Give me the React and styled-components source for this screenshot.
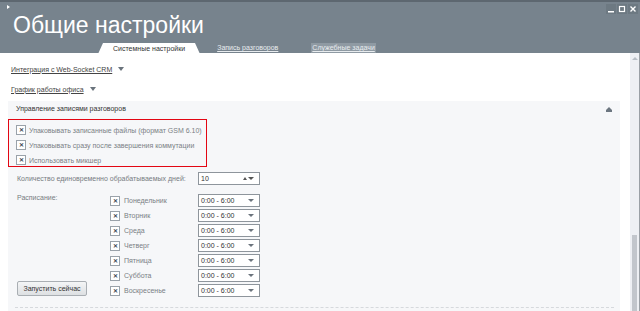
import styled, { createGlobalStyle } from 'styled-components';

const GlobalStyle = createGlobalStyle`
  html, body { margin: 0; padding: 0; }
  body {
    width: 640px;
    height: 311px;
    overflow: hidden;
    background: #ffffff;
    font-family: "Liberation Sans", Arial, sans-serif;
  }
`;

const Window = styled.div`
  width: 640px;
  height: 311px;
  display: flex;
  flex-direction: column;
  overflow: hidden;
  font-size: 7px;
  white-space: nowrap;
`;

const Header = styled.div`
  height: 53px;
  background: #77838d;
  border-top: 2px solid #5d6770;
  box-sizing: border-box;
  display: flex;
  flex-direction: column;
  position: relative;
`;

const Corner = styled.div`
  position: absolute;
  left: 7px;
  top: 3px;
  width: 0;
  height: 0;
  border-left: 3px solid #ffffff;
  border-top: 2px solid transparent;
  border-bottom: 2px solid transparent;
`;

const WinButtons = styled.div`
  position: absolute;
  right: 2px;
  top: 2px;
  display: flex;
  gap: 1px;
`;

const WinButton = styled.div`
  width: 10px;
  height: 10px;
  background: #6d7982;
  display: flex;
  align-items: center;
  justify-content: center;
`;

const Title = styled.div`
  color: #ffffff;
  font-size: 23px;
  line-height: 26px;
  margin: 10px 0 0 13px;
`;

const Tabs = styled.div`
  display: flex;
  align-items: flex-end;
  margin-top: 5px;
  padding-left: 103px;
  height: 12px;
`;

const ActiveTab = styled.div`
  position: relative;
  background: #ffffff;
  color: #333;
  height: 11px;
  line-height: 12px;
  padding: 0 10px;
  margin-right: 21px;
  &::before, &::after {
    content: '';
    position: absolute;
    bottom: 0;
    border-bottom: 11px solid #ffffff;
  }
  &::before { left: -5px; border-left: 5px solid transparent; }
  &::after { right: -5px; border-right: 5px solid transparent; }
`;

const TabLink = styled.div`
  color: #e8ecef;
  line-height: 10px;
  margin-bottom: 1px;
  text-decoration: underline;
  margin-right: 32px;
  padding: 0 1px;
  background: ${(p) => (p.$hl ? '#8f9aa3' : 'transparent')};
`;

const Body = styled.div`
  flex: 1;
  display: flex;
  min-height: 0;
`;

const Content = styled.div`
  flex: 1;
  padding: 11px 10px 0 8px;
  display: flex;
  flex-direction: column;
`;

const Scrollbar = styled.div`
  width: 9px;
  background: #eef0f4;
  display: flex;
  flex-direction: column;
  align-items: center;
  border-right: 1px solid #9aa0a6;
`;

const ScrollUp = styled.div`
  margin-top: 4px;
  width: 0;
  height: 0;
  border-left: 3px solid transparent;
  border-right: 3px solid transparent;
  border-bottom: 3px solid #b8bec5;
`;

const Thumb = styled.div`
  margin-top: auto;
  width: 5px;
  height: 76px;
  background: #c2c6cc;
`;

const Collapse = styled.div`
  display: flex;
  align-items: center;
  gap: 6px;
  padding-left: 3px;
  height: 10px;
  margin-bottom: ${(p) => (p.$last ? '7px' : '10px')};
  color: #444;
  span { text-decoration: underline; }
`;

const Arrow = styled.i`
  width: 0;
  height: 0;
  border-left: 3px solid transparent;
  border-right: 3px solid transparent;
  border-top: 4px solid #6a737c;
`;

const Panel = styled.div`
  flex: 1;
  background: #f6f7f9;
  display: flex;
  flex-direction: column;
`;

const PanelHeader = styled.div`
  height: 14px;
  padding: 4px 8px 0;
  color: #333;
  display: flex;
  justify-content: space-between;
`;

const CollapseIcon = styled.div`
  position: relative;
  width: 6px;
  height: 6px;
  margin-top: 2px;
  &::before {
    content: '';
    position: absolute;
    left: 0;
    top: 0;
    border-left: 3px solid transparent;
    border-right: 3px solid transparent;
    border-bottom: 3px solid #6c7680;
  }
  &::after {
    content: '';
    position: absolute;
    left: 0;
    top: 3px;
    width: 6px;
    height: 2px;
    background: #6c7680;
  }
`;

const Highlight = styled.div`
  width: 199px;
  box-sizing: border-box;
  border: 1px solid #e30613;
  padding: 5px 0 0 7px;
  display: flex;
  flex-direction: column;
  gap: 5px;
  height: 48px;
`;

const CheckRow = styled.label`
  display: flex;
  align-items: center;
  gap: 3px;
  color: #7a7f85;
  height: 10px;
`;

const Box = styled.span`
  width: 8px;
  height: 8px;
  flex: none;
  border: 1px solid #9aa2aa;
  background: #ffffff;
  display: flex;
  align-items: center;
  justify-content: center;
  font-size: 6px;
  font-weight: bold;
  color: #3b4650;
  line-height: 1;
`;

const Form = styled.div`
  padding: 5px 0 0 9px;
  display: grid;
  grid-template-columns: 93px 88px 62px;
  row-gap: 2px;
  color: #777c82;
`;

const CountLabel = styled.div`
  grid-column: 1 / 3;
  display: flex;
  align-items: center;
  height: 13px;
  margin-bottom: 7px;
`;

const Field = styled.div`
  width: 62px;
  height: 13px;
  box-sizing: border-box;
  border: 1px solid #8e959c;
  background: #ffffff;
  color: #333;
  display: flex;
  align-items: center;
  justify-content: space-between;
  padding: 0 5px 0 2px;
  ${(p) => p.$gap && 'margin-bottom: 7px;'}
`;

const Spin = styled.span`
  display: flex;
  align-items: center;
  gap: 1px;
  &::before {
    content: '';
    border-left: 2px solid transparent;
    border-right: 2px solid transparent;
    border-bottom: 3px solid #555;
  }
  &::after {
    content: '';
    border-left: 3px solid transparent;
    border-right: 3px solid transparent;
    border-top: 3px solid #555;
  }
`;

const Drop = styled.span`
  border-left: 3px solid transparent;
  border-right: 3px solid transparent;
  border-top: 3px solid #6a737c;
`;

const LeftCol = styled.div`
  grid-row: span 7;
  display: flex;
  flex-direction: column;
  justify-content: space-between;
`;

const RunButton = styled.button`
  width: 70px;
  height: 15px;
  margin-bottom: 1px;
  padding: 0;
  border: 1px solid #a9aeb3;
  border-radius: 2px;
  background: linear-gradient(#f4f5f6, #dde0e3);
  font-family: "Liberation Sans", Arial, sans-serif;
  font-size: 7px;
  color: #333;
`;

const DayRow = styled(CheckRow)`
  height: 13px;
  gap: 4px;
`;

const Dashed = styled.div`
  margin: auto 6px 3px 7px;
  border-top: 1px dashed #d6d9dd;
`;

const days = ['Понедельник', 'Вторник', 'Среда', 'Четверг', 'Пятница', 'Суббота', 'Воскресенье'];

const checks = [
  'Упаковывать записанные файлы (формат GSM 6.10)',
  'Упаковывать сразу после завершения коммутации',
  'Использовать микшер',
];

const Check = () => <Box>✕</Box>;

export default function App() {
  return (
    <Window>
      <GlobalStyle />
      <Header>
        <Corner />
        <WinButtons>
          <WinButton>
            <svg width="8" height="8" viewBox="0 0 8 8"><rect x="1" y="6" width="6" height="1.5" fill="#fff" /></svg>
          </WinButton>
          <WinButton>
            <svg width="8" height="8" viewBox="0 0 8 8"><rect x="1.5" y="1.5" width="5" height="5" fill="none" stroke="#fff" strokeWidth="1.2" /></svg>
          </WinButton>
          <WinButton>
            <svg width="8" height="8" viewBox="0 0 8 8"><path d="M1.5 1.5 L6.5 6.5 M6.5 1.5 L1.5 6.5" stroke="#fff" strokeWidth="1.4" /></svg>
          </WinButton>
        </WinButtons>
        <Title>Общие настройки</Title>
        <Tabs>
          <ActiveTab>Системные настройки</ActiveTab>
          <TabLink>Запись разговоров</TabLink>
          <TabLink $hl>Служебные задачи</TabLink>
        </Tabs>
      </Header>
      <Body>
        <Content>
          <Collapse>
            <span>Интеграция с Web-Socket CRM</span>
            <Arrow />
          </Collapse>
          <Collapse $last>
            <span>График работы офиса</span>
            <Arrow />
          </Collapse>
          <Panel>
            <PanelHeader>
              <span>Управление записями разговоров</span>
              <CollapseIcon />
            </PanelHeader>
            <Highlight>
              {checks.map((c) => (
                <CheckRow key={c}>
                  <Check />
                  {c}
                </CheckRow>
              ))}
            </Highlight>
            <Form>
              <CountLabel>Количество единовременно обрабатываемых дней:</CountLabel>
              <Field $gap>
                10
                <Spin />
              </Field>
              <LeftCol>
                <span>Расписание:</span>
                <RunButton>Запустить сейчас</RunButton>
              </LeftCol>
              {days.map((d) => [
                <DayRow key={d}>
                  <Check />
                  {d}
                </DayRow>,
                <Field key={d + '-f'}>
                  0:00 - 6:00
                  <Drop />
                </Field>,
              ])}
            </Form>
            <Dashed />
          </Panel>
        </Content>
        <Scrollbar>
          <ScrollUp />
          <Thumb />
        </Scrollbar>
      </Body>
    </Window>
  );
}
